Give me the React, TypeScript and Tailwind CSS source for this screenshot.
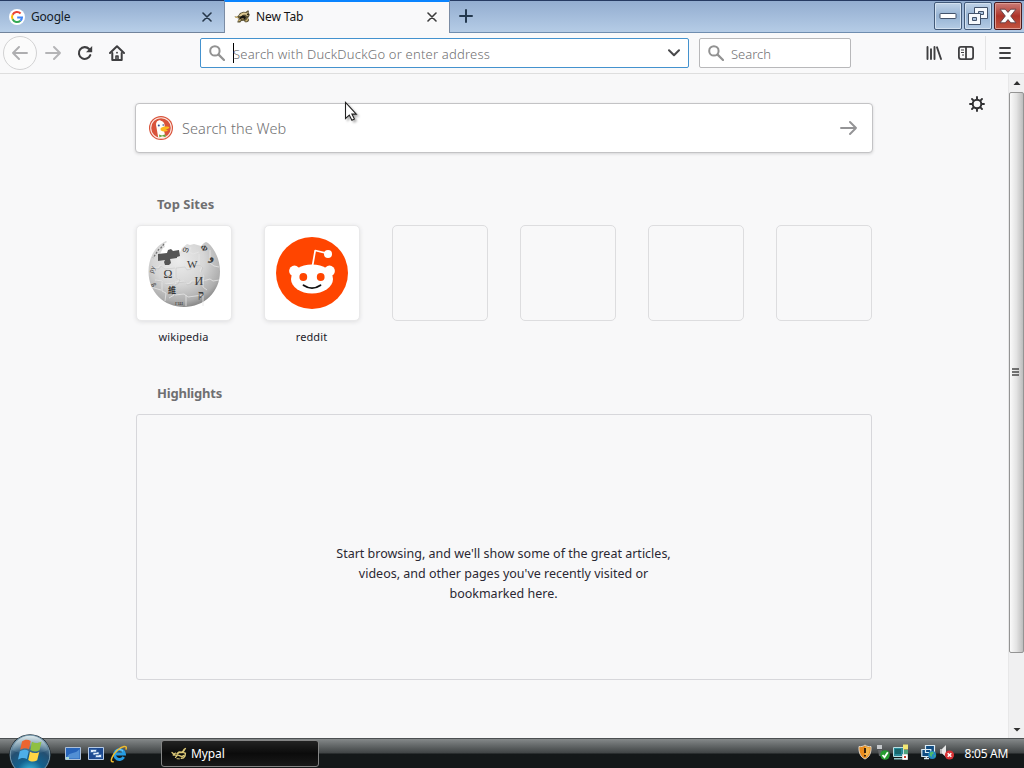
import React from 'react';

interface IconProps {
    className?: string;
}

interface Site {
    name: string;
    icon: React.ReactNode;
}

const SearchIcon: React.FC<IconProps> = ({ className = '' }) => (
    <svg width="16" height="16" viewBox="0 0 16 16" fill="none" stroke="#929292" className={`shrink-0 ${className}`}>
        <circle cx="5.9" cy="5.9" r="4.7" strokeWidth="2" />
        <path d="M9.6 9.6l5.4 5.4" strokeWidth="2.2" strokeLinecap="round" />
    </svg>
);

const CloseIcon: React.FC<IconProps> = ({ className = '' }) => (
    <svg width="10" height="10" viewBox="0 0 10 10" fill="none" stroke="currentColor" strokeWidth="1.6" strokeLinecap="round" className={`shrink-0 ${className}`}>
        <path d="M1 1l8 8M9 1L1 9" />
    </svg>
);

const GoogleIcon = () => (
    <svg width="16" height="16" viewBox="0 0 16 16" fill="none" className="shrink-0">
        <circle cx="8" cy="8" r="8" fill="#fff" />
        <g strokeWidth="2">
            <path d="M11.6 4.5A5 5 0 0 0 3.6 5.7" stroke="#ea4335" />
            <path d="M3.6 5.7a5 5 0 0 0 0 4.6" stroke="#fbbc05" />
            <path d="M3.6 10.3a5 5 0 0 0 7.8 1.5" stroke="#34a853" />
            <path d="M11.4 11.8A5 5 0 0 0 13 8.4H8.2" stroke="#4285f4" />
        </g>
    </svg>
);

// Running honey badger used by the tab
const BadgerIcon = () => (
    <svg width="16" height="16" viewBox="0 0 16 16" className="shrink-0">
        <path d="M.2 7.2l2.6.5 1.7-1.4L6 4l3.4-1.3 2.2.2L14 1.2l1 .8-.4 1.5 1.2 2.2-.8 2-1 1.2 1.2 2.2-.8 1.5-1.4.6H11l-1-1.4-2.6.1-1.2 1.6H3.4l.2-1.5L5 9.5 2.7 9z" fill="#5b5337" />
        <path d="M4.6 7L7 4.4l2.8-.9 2.6.6 1.4-1.4-.2 2.4 1.2 1.2-1.8.6-1.7-1.5-2.3.3-1.7 1.6z" fill="#ddc891" />
        <path d="M6 8.2l2.3-1.6 2 .2 1.6 1.4-1 1.9-1.6.8-2.9-.2z" fill="#17150f" />
        <path d="M1 8.1l3.1.3M4.4 12l2.4-1.5M11.5 12.2l1.9-1.4.2-1.5M7.4 9.8l2.4.2" fill="none" stroke="#cfb573" strokeWidth="1.2" />
        <path d="M12.9 5.1l1.8.8" stroke="#1b1710" strokeWidth="1.1" />
    </svg>
);

const TaskBadgerIcon = () => (
    <svg width="16" height="16" viewBox="0 0 16 16" fill="none" stroke="#dcc877" strokeLinecap="round" className="shrink-0">
        <path d="M1 6.5l2 1.8 1.5-1.2M2.2 9l3 .2M4.5 11.4L6.6 9l1.8.6" strokeWidth="1.3" />
        <path d="M6.2 7.8l2-1.7 3 .2 1.8-2" strokeWidth="1.8" />
        <path d="M13 3.6l1.4-1M12.6 6.6l1.8.7-.4 2.6-1.5 2-2.2.5M8.6 9.6l2.4 1 1.6-1.1" strokeWidth="1.4" />
        <path d="M6 12.7l2.4.2" strokeWidth="1" />
    </svg>
);

const DuckIcon = () => (
    <svg width="24" height="24" viewBox="0 0 24 24" className="shrink-0">
        <circle cx="12" cy="12" r="12" fill="#d9533a" />
        <circle cx="12" cy="12" r="10.3" fill="none" stroke="#fbe9e4" strokeWidth="1.1" />
        <path d="M9.2 21.6L7.4 11C6.6 7.6 7.2 5 10 4.8c3.2-.4 5.6 1.4 5.8 5.4l-.8 4.5 1.6 6.3a10 10 0 0 1-7.4.6z" fill="#fffdf8" />
        <path d="M7.6 6L10 4.2l2 .4-1.4 1.2z" fill="#fff" />
        <circle cx="9.8" cy="9.6" r="1" fill="#2d4f8e" />
        <circle cx="14.2" cy="9" r=".8" fill="#2d4f8e" />
        <path d="M11.6 12.2c2-1.8 5-2 8.6-1.3.6 1-1.2 2-3.7 2.3 1.4.4 2.4.8 2.2 1.6-1.8 1.1-5.6.6-7.1-.6z" fill="#fcb81c" />
        <path d="M10 18.4l3 1.1 3.2-1.3.5 3-3.2-.9-3.1 1z" fill="#67a63d" />
    </svg>
);

const WikipediaIcon = () => (
    <svg width="74" height="74" viewBox="0 0 74 74" className="font-['Liberation_Serif','Noto_Sans_CJK_SC',serif]">
        <defs>
            <radialGradient id="globe" cx=".42" cy=".3" r=".72">
                <stop offset="0" stopColor="#ececec" />
                <stop offset=".5" stopColor="#d6d6d6" />
                <stop offset=".85" stopColor="#aeaeae" />
                <stop offset="1" stopColor="#848484" />
            </radialGradient>
        </defs>
        <path d="M19 5C8 10 1.5 22 1.5 35.5 1.5 56 17 71 37 71s36-15 36-35.5C73 24 68 13 61 7l-2-1-2 1-3 3-7-2-4 1-3-1-5 4-3 6-18 3-1-3 3-6 2-1-1-3 3-2z" fill="url(#globe)" />
        <path d="M11 18l9-1 1-3 3-1 2 2 6-1 1 6-3 1v1l-7 1 1 4-2 2h-4l-1-3 1-2-7 1z" fill="#555" />
        <g fill="none" stroke="#e6e6e6" strokeWidth=".8">
            <path d="M4 31l7 1 2-3 4 3 10-1M28 31v10l4 2-2 4-3 1v11l-5 3M28 31l9-1 2 3 4-1 1-3 8-1V18M52 28l3 3-2 4 4 4-1 12 4 3M28 46l9-1 2 3 4-1 1-2 12 0M56 45l7-2 3 2 6-1M8 44l7 1 3 3 9-1M28 59l9-1 4 3 15-2v11M15 45v10l4 2-1 8M39 59v11M63 14v13l4 3 5 1M44 11l-2 5 4 2 6-2M4 51l10 3" />
        </g>
        <g fill="none" stroke="#bbb" strokeWidth=".4">
            <path d="M5 32l7 1 2-3 4 3 10-1M29 32v10l4 2-2 4-3 1v11M29 32l9-1 2 3 4-1 1-3 8-1M53 29l3 3-2 4 4 4-1 12M29 47l9-1 2 3 4-1 1-2 12 0M9 45l7 1 3 3 9-1" />
        </g>
        <g fill="#383838">
            <text x="16.5" y="42" fontSize="12">Ω</text>
            <text x="40" y="32" fontSize="11">W</text>
            <text x="47.5" y="49" fontSize="12">И</text>
            <text x="21" y="57" fontSize="8" fontWeight="bold">維</text>
            <text x="51" y="62" fontSize="11" fontWeight="bold">ק</text>
            <text x="36" y="16" fontSize="8" transform="rotate(18 40 13)">თ</text>
            <text x="54" y="15" fontSize="8" fontWeight="bold" transform="rotate(25 58 12)">Ф</text>
            <text x="63" y="25" fontSize="10" fontWeight="bold" transform="rotate(15 65 22)">و</text>
            <text x="2" y="36" fontSize="7" transform="rotate(-70 5 34)">ру</text>
            <text x="4" y="52" fontSize="7" transform="rotate(60 7 50)">ß</text>
            <text x="28" y="69" fontSize="5">ГШ</text>
        </g>
        <path d="M17 8l-4 5M12 13l-6 9" fill="none" stroke="#737373" strokeWidth="1.3" strokeDasharray="2 1.5" />
    </svg>
);

const RedditIcon = () => (
    <svg width="72" height="72" viewBox="0 0 72 72">
        <circle cx="36" cy="36" r="36" fill="#ff4500" />
        <path d="M36.5 29l2.7-15.5 12 2.8" fill="none" stroke="#fff" strokeWidth="1.7" strokeLinejoin="round" />
        <circle cx="52" cy="17" r="4" fill="#fff" />
        <circle cx="18.5" cy="34" r="5.4" fill="#fff" />
        <circle cx="53.5" cy="34" r="5.4" fill="#fff" />
        <ellipse cx="36" cy="42" rx="21" ry="14.6" fill="#fff" />
        <circle cx="27.3" cy="40" r="3.9" fill="#ff4500" />
        <circle cx="44.7" cy="40" r="3.9" fill="#ff4500" />
        <path d="M27.5 48.3q8.5 5.8 17 0" fill="none" stroke="#111" strokeWidth="1.8" strokeLinecap="round" />
    </svg>
);

const sites: (Site | null)[] = [
    { name: 'wikipedia', icon: <WikipediaIcon /> },
    { name: 'reddit', icon: <RedditIcon /> },
    null,
    null,
    null,
    null,
];

const captionButton = 'flex h-[28px] w-[28px] items-center justify-center rounded-[2px] border border-[#425a79] bg-linear-to-b from-[#bfd2e7] via-[#96b3d3] to-[#b5cce5] shadow-[inset_0_0_0_1px_#d3e1f0]';

const TabBar = () => (
    <div className="flex h-[33px] border-t border-[#263a62] bg-linear-to-b from-[#93add0] to-[#b9d0e9]">
        <div className="flex w-[224px] items-center border-b border-[#72849c] pr-3 pl-[9px] text-xs text-[#141c26]">
            <GoogleIcon />
            <span className="ml-[6px] flex-1 tracking-[-0.2px]">Google</span>
            <CloseIcon className="text-[#26374a]" />
        </div>
        <div className="-mt-px flex w-[226px] items-center border-x border-t-2 border-x-[#7b8ca4] border-t-[#0a84ff] bg-[#f9f9fa] pr-[12px] pb-px pl-[9px] text-xs text-[#141414]">
            <BadgerIcon />
            <span className="ml-[6px] flex-1 tracking-[-0.1px]">New Tab</span>
            <CloseIcon className="text-[#3c3c3c]" />
        </div>
        <div className="flex flex-1 items-center justify-between border-b border-[#6f8daf] bg-linear-to-b from-[#93add0] to-[#b5cce6] pl-[9px]">
            <svg width="14" height="14" viewBox="0 0 14 14" stroke="#23384e" strokeWidth="2" strokeLinecap="round" className="-mt-px">
                <path d="M7 1v12M1 7h12" />
            </svg>
            <div className="-mt-px flex gap-[2px] pr-[2px]">
                <div className={captionButton}>
                    <svg width="18" height="8" viewBox="0 0 18 8">
                        <rect x="1" y="1.5" width="16" height="5" rx=".5" fill="#fff" stroke="#43536b" />
                    </svg>
                </div>
                <div className={captionButton}>
                    <svg width="22" height="20" viewBox="0 0 22 20" fill="none">
                        <path d="M7.5 1.5h13v11h-13z" fill="#f6f9fc" stroke="#43536b" />
                        <path d="M11.5 5.5h5v3h-5z" fill="#a9c1dc" stroke="#43536b" />
                        <path d="M1.5 7.5h12v11h-12z" fill="#f6f9fc" stroke="#43536b" />
                        <path d="M5.5 11.5h4v3h-4z" fill="#a9c1dc" stroke="#43536b" />
                    </svg>
                </div>
                <div className="flex h-[28px] w-[28px] items-center justify-center rounded-[2px] border border-[#4b1b20] bg-linear-to-b from-[#cb7b77] via-[#ad3329] to-[#c15540] shadow-[inset_0_0_0_1px_#df9c91]">
                    <svg width="18" height="16" viewBox="0 0 18 16">
                        <path d="M1 1.2h5.2L9 4.4l2.8-3.2H17L11.7 8l5.3 6.8h-5.2L9 11.6l-2.8 3.2H1L6.3 8z" fill="#fff" stroke="#5d3f45" strokeWidth=".9" />
                    </svg>
                </div>
            </div>
        </div>
    </div>
);

const NavBar = () => (
    <div className="flex h-[41px] items-center border-b border-[#dedede] bg-[#f9f9fa]">
        <div className="ml-[3px] flex h-[34px] w-[34px] shrink-0 items-center justify-center rounded-full border border-[#d2d2d3] bg-[#fbfbfb]">
            <svg width="16" height="14" viewBox="0 0 16 14" fill="none" stroke="#aeaeb0" strokeWidth="1.9" strokeLinecap="round" strokeLinejoin="round">
                <path d="M15 7H1M7 1L1 7l6 6" />
            </svg>
        </div>
        <svg width="16" height="14" viewBox="0 0 16 14" fill="none" stroke="#b4b4b6" strokeWidth="1.9" strokeLinecap="round" strokeLinejoin="round" className="ml-[8px]">
            <path d="M1 7h14M9 1l6 6-6 6" />
        </svg>
        <svg width="16" height="16" viewBox="0 0 16 16" fill="none" className="ml-[16px]">
            <path d="M13.3 10.2A5.9 5.9 0 1 1 12.1 4" stroke="#3f3f41" strokeWidth="2.1" strokeLinecap="round" />
            <path d="M15.2 1v6.3H9z" fill="#3f3f41" />
        </svg>
        <svg width="16" height="16" viewBox="0 0 16 16" fill="none" stroke="#3f3f41" strokeWidth="2" strokeLinecap="round" strokeLinejoin="round" className="ml-[16px]">
            <path d="M1 8l7-6.8L15 8" />
            <path d="M3.3 8v7h9.4V8" />
            <path d="M7 14v-3h2v3" strokeWidth="1.6" />
            <path d="M8 7.6v.1" strokeWidth="1.8" />
        </svg>
        <div className="ml-[75px] flex h-[30px] w-[489px] items-center rounded-[2px] border border-[#4492ce] bg-white px-[8px]">
            <SearchIcon />
            <div className="ml-[8px] h-[20px] w-px bg-black" />
            <span className="-ml-px flex-1 pt-px text-[13px] leading-5 font-light tracking-[0.2px] whitespace-nowrap text-[#707072]">Search with DuckDuckGo or enter address</span>
            <svg width="12" height="8" viewBox="0 0 12 8" fill="none" stroke="#49494b" strokeWidth="2" strokeLinecap="round" strokeLinejoin="round">
                <path d="M1 1.3l5 5 5-5" />
            </svg>
        </div>
        <div className="ml-[10px] flex h-[30px] w-[152px] items-center rounded-[2px] border border-[#b8b8ba] bg-white pl-[8px]">
            <SearchIcon />
            <span className="ml-[7px] pt-px text-[13px] leading-5 font-light text-[#707072]">Search</span>
        </div>
        <svg width="16" height="16" viewBox="0 0 16 16" fill="none" stroke="#3f3f41" strokeWidth="1.9" strokeLinecap="round" className="ml-[75px]">
            <path d="M1.5 2v12M5 4.2V14M8.5 2v12M11 2.3L15 14" />
        </svg>
        <svg width="16" height="14" viewBox="0 0 16 14" fill="none" stroke="#3f3f41" strokeWidth="1.8" className="ml-[16px]">
            <rect x=".9" y=".9" width="14.2" height="12.2" rx="2" />
            <path d="M8 1v12" />
            <path d="M3 4h3M3 6.5h3M4 9h2" strokeWidth="1" />
        </svg>
        <div className="ml-[11px] h-[34px] w-px bg-[#e4e4e5]" />
        <svg width="12" height="12" viewBox="0 0 12 12" stroke="#3f3f41" strokeWidth="1.8" strokeLinecap="round" className="ml-[13px]">
            <path d="M1 1h10M1 6h10M1 11h10" />
        </svg>
    </div>
);

const TopSite: React.FC<{ site: Site | null }> = ({ site }) => {
    if (!site) {
        return <div className="h-24 w-24 rounded-[5px] border border-[#dddddf]" />;
    }

    return (
        <div className="flex w-24 flex-col items-center">
            <div className="flex h-24 w-24 items-center justify-center rounded-[5px] border border-[#e9e9ea] bg-white shadow-[0_1px_4px_#dedee0]">
                {site.icon}
            </div>
            <span className="mt-[8px] -ml-px text-[11px] leading-4 tracking-[0.1px] text-[#23222b]">{site.name}</span>
        </div>
    );
};

const NewTabPage = () => (
    <main className="flex flex-1 justify-center bg-[#f8f8f9]">
        <div className="w-[736px] pt-[30px]">
            <div className="-mx-px -mt-px flex h-[50px] items-center rounded-[4px] border border-[#c3c3c5] bg-white pr-[15px] pl-[13px] shadow-[0_1px_3px_#d4d4d6]">
                <DuckIcon />
                <span className="ml-[9px] flex-1 text-[14.5px] leading-5 font-light tracking-[0.07px] text-[#707072]">Search the Web</span>
                <svg width="17" height="14" viewBox="0 0 17 14" fill="none" stroke="#949496" strokeWidth="1.9" strokeLinecap="round" strokeLinejoin="round">
                    <path d="M1 7h15M10 1l6 6-6 6" />
                </svg>
            </div>
            <h2 className="mt-[41px] ml-[21px] text-[13px] leading-5 font-bold text-[#6f6f71]">Top Sites</h2>
            <div className="mt-[11px] flex h-[126px] justify-between">
                {sites.map((site, i) => (
                    <TopSite key={i} site={site} />
                ))}
            </div>
            <h2 className="mt-[32px] ml-[21px] text-[13px] leading-5 font-bold tracking-[-0.2px] text-[#6f6f71]">Highlights</h2>
            <div className="mt-[11px] flex h-[266px] justify-center rounded-[3px] border border-[#d7d7db] pt-[129px] pr-px">
                <p className="w-[360px] text-center text-[12.5px] leading-5 text-[#2b2833]">
                    Start browsing, and we'll show some of the great articles,
                    <br />
                    videos, and other pages you've recently visited or
                    <br />
                    bookmarked here.
                </p>
            </div>
        </div>
    </main>
);

const ScrollBar = () => (
    <div className="flex w-4 flex-col items-center border-l border-[#e7e7e8] bg-[#f0f0f1]">
        <svg width="8" height="18" viewBox="0 0 8 18">
            <path d="M4 7l3.5 4h-7z" fill="#303030" />
        </svg>
        <div className="flex h-[561px] w-[15px] items-center justify-center rounded-[2px] border border-[#949494] bg-linear-to-r from-[#fafafa] via-[#e3e3e3] to-[#bdbdbd] pr-[2px] pb-[2px]">
            <svg width="7" height="8" viewBox="0 0 7 8" stroke="#4a4a4a" strokeWidth="1.3">
                <path d="M0 1h7M0 4h7M0 7h7" />
            </svg>
        </div>
        <div className="flex-1" />
        <svg width="8" height="18" viewBox="0 0 8 18">
            <path d="M.5 8h7L4 11.5z" fill="#303030" />
        </svg>
    </div>
);

const StartOrb = () => (
    <svg width="44" height="36" viewBox="0 0 44 36" className="absolute bottom-0 left-2">
        <defs>
            <radialGradient id="orb" cx=".5" cy=".95" r=".95">
                <stop offset="0" stopColor="#45cbed" />
                <stop offset=".35" stopColor="#13628f" />
                <stop offset=".65" stopColor="#244f71" />
                <stop offset="1" stopColor="#a6bdc8" />
            </radialGradient>
            <linearGradient id="orbShine" x2="0" y2="1">
                <stop offset="0" stopColor="#e7f1f3" stopOpacity=".85" />
                <stop offset="1" stopColor="#8eb2c2" stopOpacity=".1" />
            </linearGradient>
        </defs>
        <circle cx="22" cy="23" r="20.8" fill="#18242e" />
        <circle cx="22" cy="23" r="19.8" fill="url(#orb)" stroke="#779bb0" strokeWidth="1" />
        <path d="M4 18a18.5 18.5 0 0 1 36 0c-9 5-27 5-36 0z" fill="url(#orbShine)" />
        <path d="M14 9.5c3-2.500 6-2.300 8.700-.5L21 17.300c-3-1.700-6-1.500-8.800.5z" fill="#ed6530" />
        <path d="M24 9.700c3 1.800 6 1.700 9.500-.2l-2 8.800c-3.400 1.800-6.200 1.700-9.200-.2z" fill="#8fc042" />
        <path d="M11.800 19.300c3-2 6-2.100 8.900-.4L19 27.100c-3-1.700-5.800-1.500-9 .4z" fill="#4eaee8" />
        <path d="M22 19.700c3 1.800 6 1.900 9.200.2l-2 8.300c-3.300 1.900-6.200 1.700-9-.3z" fill="#ffd544" />
    </svg>
);

const QuickLaunch = () => (
    <div className="flex items-center">
        <svg width="17" height="14" viewBox="0 0 17 14">
            <path d="M.5.5h15v12H.5z" fill="#2764ba" stroke="#acbfd9" />
            <path d="M2 10C5 4 10 8 14.5 2v9.5H2z" fill="#528fd4" />
            <path d="M1 10h3v2.5H1z" fill="#a8d8d3" />
        </svg>
        <svg width="17" height="14" viewBox="0 0 17 14" className="ml-[6px]">
            <path d="M.5.5h15v12H.5z" fill="#1d4a91" stroke="#b4c9e5" />
            <path d="M2.5 2.5h6v3h-6zM5 5h6v3H5zM7.5 7.5h6v3h-6z" fill="#e0edfb" stroke="#2b5c9f" strokeWidth=".7" />
        </svg>
        <svg width="18" height="18" viewBox="0 0 18 18" fill="none" className="ml-[5px]">
            <path d="M13.8 12.1A5 5 0 1 1 14.5 9H5.3" stroke="#269be2" strokeWidth="2.8" />
            <path d="M5.2 6.4A5 5 0 0 1 13 6.2" stroke="#87d5fa" strokeWidth="1" />
            <path d="M3.2 16.8C-.8 17.5 2 10 7.7 5 12 1.3 17.5-.3 16.1 4" stroke="#f0bc2d" strokeWidth="1.5" strokeLinecap="round" />
        </svg>
    </div>
);

const Tray = () => (
    <div className="-mt-[3px] flex items-center">
        <svg width="14" height="16" viewBox="0 0 14 16">
            <path d="M7 1c2 1.5 4 1.8 6 1.5C13.5 9 11 13.5 7 15 3 13.5.5 9 1 2.5 3 2.8 5 2.5 7 1z" fill="#e98b1d" stroke="#ded4c4" />
            <path d="M7 2.3c1.5 1 3 1.3 4.8 1.2C12 8 10.5 12 7 13.8z" fill="#f3b54a" />
            <path d="M7 4v5M7 11v1.5" stroke="#38200b" strokeWidth="2" />
        </svg>
        <svg width="15" height="16" viewBox="0 0 15 16" className="ml-[4px]">
            <path d="M1 1h5v4H1z" fill="#c5c8cb" />
            <path d="M2 6h4v6H3z" fill="#606366" />
            <circle cx="9" cy="11" r="4.8" fill="#269b30" />
            <path d="M6.5 11l2 2.3 3.3-5" fill="none" stroke="#fff" strokeWidth="1.8" />
        </svg>
        <svg width="16" height="16" viewBox="0 0 16 16" className="ml-[2px]">
            <path d="M.5 3.5h10v9H.5z" fill="#298a99" stroke="#bce0e3" />
            <path d="M2 5h6v5H2z" fill="#18666c" />
            <path d="M1 14h8v1.5H1z" fill="#91c3c5" />
            <path d="M10 .5h5v5h-5z" fill="#f3e773" />
            <path d="M11 6h4v4h-4z" fill="#4ea47d" />
            <path d="M9.5 10.5h5v5h-5z" fill="#fff" stroke="#ddd" />
            <path d="M11 12h2v2h-2z" fill="#c74030" />
        </svg>
        <svg width="16" height="16" viewBox="0 0 16 16" className="ml-[12px]">
            <path d="M4.5 1.5h9v7h-9zM.8 5.5h9v7h-9z" fill="#104c82" stroke="#dcecf5" strokeWidth="1.2" />
            <path d="M3 14.5h5M5.3 12v2" stroke="#dcecf5" strokeWidth="1.3" />
            <circle cx="11.2" cy="11" r="4" fill="#2387c1" />
            <path d="M9 8.5l3-1 .8 2-2 1.3.2 2.3-2.3-1.7zM13 11l1.5.5-1 2z" fill="#4fbb6a" />
        </svg>
        <svg width="16" height="16" viewBox="0 0 16 16" className="ml-[2px]">
            <path d="M1 5h2l4-4v12L3 9.5H1z" fill="#e8e8e8" />
            <path d="M2 5v4.5" stroke="#888" />
            <circle cx="10.5" cy="11" r="4.6" fill="#d83235" />
            <path d="M8.7 9.2l3.6 3.6M12.3 9.2l-3.6 3.6" stroke="#fff" strokeWidth="1.5" />
        </svg>
        <span className="mt-[3px] ml-[10px] text-xs tracking-[-0.3px] text-white">8:05 AM</span>
    </div>
);

const Taskbar = () => (
    <footer className="relative flex h-[30px] items-center border-t border-[#4c5052] bg-linear-to-b from-[#85898a] from-0% via-[#414546] via-48% to-[#141819] to-52% pr-4 pl-[65px]">
        <StartOrb />
        <QuickLaunch />
        <div className="ml-[33px] flex h-[27px] w-[158px] items-center rounded-[3px] border border-[#858585] bg-linear-to-b from-[#232323] via-[#0b0b0b] via-50% to-[#191919] pl-[9px] text-xs text-white">
            <TaskBadgerIcon />
            <span className="ml-[4px] tracking-[-0.1px]">Mypal</span>
        </div>
        <div className="flex-1" />
        <Tray />
    </footer>
);

const App = () => {
    return (
        <div className="relative flex h-[768px] w-[1024px] flex-col overflow-hidden font-['Noto_Sans','Open_Sans',sans-serif]">
            <TabBar />
            <NavBar />
            <div className="relative flex min-h-0 flex-1">
                <NewTabPage />
                <ScrollBar />
                <svg width="16" height="16" viewBox="0 0 16 16" fill="none" stroke="#303032" strokeLinecap="round" className="absolute top-[22px] left-[969px]">
                    <circle cx="8" cy="8" r="4.3" strokeWidth="2" />
                    <path d="M8 1v2.2M8 12.8V15M1 8h2.2M12.8 8H15M3 3l1.6 1.6M11.4 11.4L13 13M13 3l-1.6 1.6M4.6 11.4L3 13" strokeWidth="1.9" />
                </svg>
            </div>
            <Taskbar />
            <svg width="14" height="22" viewBox="0 0 14 22" className="absolute top-[101px] left-[344px] drop-shadow-[2px_2px_1px_rgba(0,0,0,0.3)]">
                <path d="M1.5 1.5v16l3.8-3.4 2.6 5.2 2.5-1.2-2.5-5h4.4z" fill="#fff" stroke="#222" strokeWidth="1.1" />
            </svg>
        </div>
    );
};

export default App;
